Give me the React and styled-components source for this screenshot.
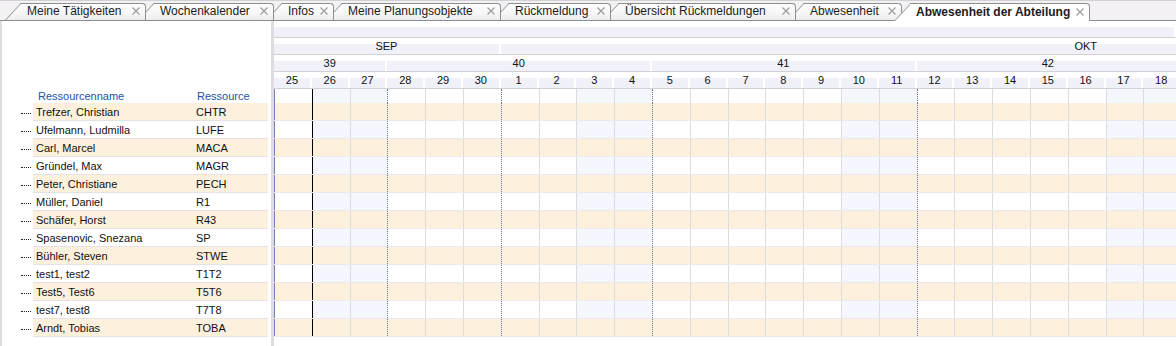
import React from 'react';
import styled, { createGlobalStyle } from 'styled-components';

const GlobalStyle = createGlobalStyle`
  html, body { margin: 0; padding: 0; background: #fff; }
  body {
    font-family: "Liberation Sans", Arial, sans-serif;
    width: 1176px; height: 346px; overflow: hidden;
  }
  * { box-sizing: border-box; }
`;

const COL = 37.8;
const ORANGE = '#fdf0dc';
const WEEKEND = '#f4f7fd';

const TABS = [
  { label: 'Meine Tätigkeiten', w: 141 },
  { label: 'Wochenkalender', w: 136 },
  { label: 'Infos', w: 68 },
  { label: 'Meine Planungsobjekte', w: 175 },
  { label: 'Rückmeldung', w: 118 },
  { label: 'Übersicht Rückmeldungen', w: 193 },
  { label: 'Abwesenheit', w: 114 },
  { label: 'Abwesenheit der Abteilung', w: 196, active: true },
];

const PEOPLE = [
  ['Trefzer, Christian', 'CHTR'],
  ['Ufelmann, Ludmilla', 'LUFE'],
  ['Carl, Marcel', 'MACA'],
  ['Gründel, Max', 'MAGR'],
  ['Peter, Christiane', 'PECH'],
  ['Müller, Daniel', 'R1'],
  ['Schäfer, Horst', 'R43'],
  ['Spasenovic, Snezana', 'SP'],
  ['Bühler, Steven', 'STWE'],
  ['test1, test2', 'T1T2'],
  ['Test5, Test6', 'T5T6'],
  ['test7, test8', 'T7T8'],
  ['Arndt, Tobias', 'TOBA'],
];

const DAYS = [25, 26, 27, 28, 29, 30, 1, 2, 3, 4, 5, 6, 7, 8, 9, 10, 11, 12, 13, 14, 15, 16, 17, 18];
const WEEKENDS = new Set([26, 27, 3, 4, 10, 11, 17, 18]);
const WEEK_STARTS = new Set([28, 1, 5, 12]);
const TODAY = 26;

const MONTHS = [
  { label: 'SEP', span: 6 },
  { label: 'OKT', span: 31 },
];
const WEEKS = [
  { label: '39', span: 3 },
  { label: '40', span: 7 },
  { label: '41', span: 7 },
  { label: '42', span: 7 },
];

/* ---------- Tab strip ---------- */

const TabStrip = styled.div`
  display: flex;
  align-items: flex-end;
  height: 21px;
  padding-left: 5px;
  background: #f3f1f4;
  border-top: 1px solid #d2d0d4;
  border-bottom: 1px solid #8a8d96;
`;

const tabBg = (active) =>
  active ? '#ffffff' : 'linear-gradient(to bottom, #fdfdfd 0%, #f6f6f6 60%, #ededed 100%)';

const Tab = styled.div`
  position: relative;
  z-index: ${(p) => p.$z};
  flex: 0 0 ${(p) => p.$w}px;
  height: ${(p) => (p.$active ? 18 : 17)}px;
  margin-left: ${(p) => (p.$first ? 0 : -8)}px;
  margin-bottom: ${(p) => (p.$active ? -1 : 0)}px;
  display: flex;
  align-items: center;
  padding: 0 6px 1px 22px;
  font-size: 12px;
  font-weight: ${(p) => (p.$active ? 700 : 400)};
  color: #1c1c1c;
  white-space: nowrap;

  &::before {
    content: '';
    position: absolute;
    left: 0;
    top: 0;
    bottom: 0;
    width: 26px;
    background: ${(p) => tabBg(p.$active)};
    border-left: 1px solid #8e8e8e;
    border-top: 1px solid #8e8e8e;
    transform-origin: left bottom;
    transform: skewX(-43deg);
  }
  &::after {
    content: '';
    position: absolute;
    left: 16px;
    right: 0;
    top: 0;
    bottom: 0;
    background: ${(p) => tabBg(p.$active)};
    border-top: 1px solid #8e8e8e;
    border-right: 1px solid #8e8e8e;
    border-top-right-radius: 4px;
  }
`;

const TabLabel = styled.span`
  position: relative;
  z-index: 1;
`;

const CloseBtn = styled.span`
  position: relative;
  z-index: 1;
  margin-left: auto;
  display: flex;
  width: 8px;
  height: 8px;
`;

const CloseIcon = () => (
  <svg width="8" height="8" viewBox="0 0 8 8">
    <path d="M0.5 0.5 L7.5 7.5 M7.5 0.5 L0.5 7.5" stroke="#9c9c9c" strokeWidth="1.2" fill="none" />
  </svg>
);

/* ---------- Main area ---------- */

const Main = styled.div`
  display: flex;
  height: 325px;
`;

const LeftPanel = styled.div`
  flex: 0 0 271px;
  display: flex;
  flex-direction: column;
  border-left: 2px solid #dedede;
  background: #fff;
`;

const LeftTop = styled.div`
  height: 68px;
  flex: none;
`;

const ColHeader = styled.div`
  height: 14px;
  flex: none;
  display: flex;
  align-items: center;
  font-size: 11px;
  color: #2352a8;
  padding-left: 36px;
`;

const ColHeadName = styled.span`
  flex: 0 0 159px;
`;

const LeftRow = styled.div`
  display: flex;
  align-items: center;
  height: 18px;
  flex: none;
`;

const TreeDots = styled.span`
  flex: 0 0 10px;
  margin-left: 19px;
  margin-right: 2px;
  margin-top: 2px;
  border-top: 1px dotted #222;
`;

const RowBody = styled.div`
  flex: 0 0 235px;
  height: 18px;
  display: flex;
  align-items: center;
  padding-left: 3px;
  background: ${(p) => (p.$alt ? ORANGE : '#fff')};
  border-bottom: 1px solid #e5e1e5;
  font-size: 11px;
  color: #111;
`;

const NameCell = styled.span`
  flex: 0 0 160px;
  white-space: nowrap;
`;

const CodeCell = styled.span`
  white-space: nowrap;
`;

const Splitter = styled.div`
  flex: 0 0 3px;
  background: #dedbe1;
`;

const GridArea = styled.div`
  flex: 1;
  min-width: 0;
  overflow: hidden;
  display: flex;
  flex-direction: column;
`;

const HeaderRow = styled.div`
  display: flex;
  height: 17px;
  flex: none;
  border-bottom: 1px solid #d3d0d6;
`;

const HeadCell = styled.div`
  flex: ${(p) => (p.$span ? `0 0 ${p.$span * COL}px` : '1 1 auto')};
  height: 16px;
  border-right: 2px solid #fff;
  background: linear-gradient(to bottom, #ffffff 0%, #ffffff 35%, #f0f1f9 35%, #eff0f8 100%);
  font-size: 11px;
  line-height: 16px;
  text-align: center;
  color: #111;
  white-space: nowrap;
  overflow: hidden;
`;

const BodyRow = styled.div`
  display: flex;
  flex: none;
  height: ${(p) => (p.$spacer ? 14 : 18)}px;
  border-bottom: ${(p) => (p.$spacer ? 'none' : '1px solid #ece8ec')};
`;

const lineStyle = (kind) => {
  switch (kind) {
    case 'edge': return '1px solid #7483b4';
    case 'today': return '1px solid #000';
    case 'week': return '1px dotted #6c7396';
    default: return '1px solid #dcdcdc';
  }
};

const BodyCell = styled.div`
  flex: 0 0 ${COL}px;
  height: 100%;
  border-left: ${(p) => lineStyle(p.$line)};
  background: ${(p) => (p.$alt ? ORANGE : p.$weekend ? WEEKEND : '#fff')};
`;

const lineKind = (d, i) => {
  if (i === 0) return 'edge';
  if (d === TODAY) return 'today';
  if (WEEK_STARTS.has(d)) return 'week';
  return 'grid';
};

const GridRow = ({ alt, spacer }) => (
  <BodyRow $spacer={spacer}>
    {DAYS.map((d, i) => (
      <BodyCell key={i} $line={lineKind(d, i)} $weekend={WEEKENDS.has(d)} $alt={alt} />
    ))}
  </BodyRow>
);

export default function App() {
  return (
    <>
      <GlobalStyle />
      <TabStrip>
        {TABS.map((t, i) => (
          <Tab
            key={t.label}
            $w={t.w}
            $first={i === 0}
            $active={t.active}
            $z={t.active ? 50 : TABS.length - i}
          >
            <TabLabel>{t.label}</TabLabel>
            <CloseBtn><CloseIcon /></CloseBtn>
          </Tab>
        ))}
      </TabStrip>
      <Main>
        <LeftPanel>
          <LeftTop />
          <ColHeader>
            <ColHeadName>Ressourcenname</ColHeadName>
            <span>Ressource</span>
          </ColHeader>
          {PEOPLE.map(([name, code], i) => (
            <LeftRow key={code}>
              <TreeDots />
              <RowBody $alt={i % 2 === 0}>
                <NameCell>{name}</NameCell>
                <CodeCell>{code}</CodeCell>
              </RowBody>
            </LeftRow>
          ))}
        </LeftPanel>
        <Splitter />
        <GridArea>
          <HeaderRow>
            <HeadCell />
          </HeaderRow>
          <HeaderRow>
            {MONTHS.map((m) => (
              <HeadCell key={m.label} $span={m.span}>{m.label}</HeadCell>
            ))}
          </HeaderRow>
          <HeaderRow>
            {WEEKS.map((w) => (
              <HeadCell key={w.label} $span={w.span}>{w.label}</HeadCell>
            ))}
          </HeaderRow>
          <HeaderRow>
            {DAYS.map((d, i) => (
              <HeadCell key={i} $span={1}>{d}</HeadCell>
            ))}
          </HeaderRow>
          <GridRow spacer />
          {PEOPLE.map(([, code], i) => (
            <GridRow key={code} alt={i % 2 === 0} />
          ))}
        </GridArea>
      </Main>
    </>
  );
}
